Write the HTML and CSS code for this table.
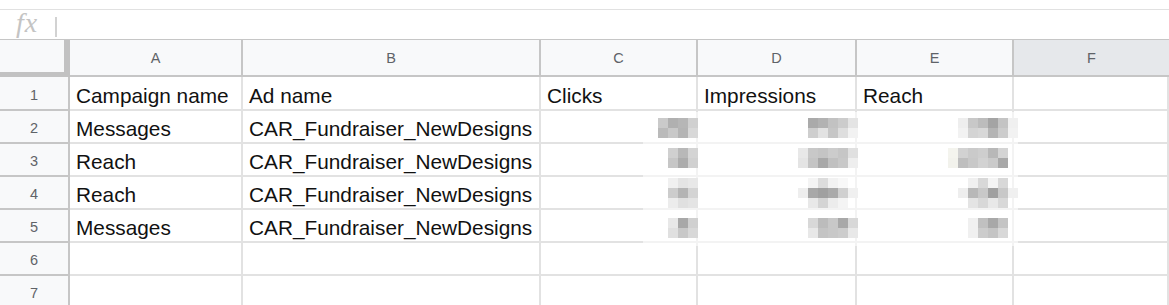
FILE: index.html
```html
<!DOCTYPE html>
<html>
<head>
<meta charset="utf-8">
<link rel="stylesheet" href="styles.css">
</head>
<body>
<div class="topgap"></div>
<div class="formula"><span class="fx">fx</span><span class="sep"></span></div>
<div class="sheet">
  <div class="corner"></div>
  <div class="ch">A</div>
  <div class="ch">B</div>
  <div class="ch">C</div>
  <div class="ch">D</div>
  <div class="ch">E</div>
  <div class="ch sel">F</div>

  <div class="rh">1</div>
  <div class="c">Campaign name</div>
  <div class="c">Ad name</div>
  <div class="c">Clicks</div>
  <div class="c">Impressions</div>
  <div class="c">Reach</div>
  <div class="c"></div>

  <div class="rh">2</div>
  <div class="c">Messages</div>
  <div class="c">CAR_Fundraiser_NewDesigns</div>
  <div class="c"></div><div class="c"></div><div class="c"></div><div class="c"></div>

  <div class="rh">3</div>
  <div class="c">Reach</div>
  <div class="c">CAR_Fundraiser_NewDesigns</div>
  <div class="c"></div><div class="c"></div><div class="c"></div><div class="c"></div>

  <div class="rh">4</div>
  <div class="c">Reach</div>
  <div class="c">CAR_Fundraiser_NewDesigns</div>
  <div class="c"></div><div class="c"></div><div class="c"></div><div class="c"></div>

  <div class="rh">5</div>
  <div class="c">Messages</div>
  <div class="c">CAR_Fundraiser_NewDesigns</div>
  <div class="c"></div><div class="c"></div><div class="c"></div><div class="c"></div>

  <div class="rh">6</div>
  <div class="c"></div><div class="c"></div><div class="c"></div><div class="c"></div><div class="c"></div><div class="c"></div>

  <div class="rh">7</div>
  <div class="c"></div><div class="c"></div><div class="c"></div><div class="c"></div><div class="c"></div><div class="c"></div>

  <svg class="redact" width="380" height="140" viewBox="0 0 380 140" shape-rendering="crispEdges" aria-hidden="true">
    <rect x="5" y="4" width="375" height="134" fill="#fff" fill-opacity="0.6"/>
    <!-- C2 -->
    <g transform="translate(20,10)">
      <rect x="0" y="0" width="10" height="10" fill="#cacaca"/><rect x="10" y="0" width="10" height="10" fill="#b0b0b0"/><rect x="20" y="0" width="10" height="10" fill="#b6b6b6"/><rect x="30" y="0" width="10" height="10" fill="#d0d0d0"/>
      <rect x="0" y="10" width="10" height="10" fill="#bababa"/><rect x="10" y="10" width="10" height="10" fill="#c8c8c8"/><rect x="20" y="10" width="10" height="10" fill="#b4b4b4"/><rect x="30" y="10" width="10" height="10" fill="#d8d8d8"/>
    </g>
    <!-- D2 -->
    <g transform="translate(170,10)">
      <rect x="0" y="0" width="10" height="10" fill="#aaaaaa"/><rect x="10" y="0" width="10" height="10" fill="#b2b2b2"/><rect x="20" y="0" width="10" height="10" fill="#c2c2c2"/><rect x="30" y="0" width="10" height="10" fill="#cccccc"/><rect x="40" y="0" width="10" height="10" fill="#e4e4e4"/>
      <rect x="0" y="10" width="10" height="10" fill="#cecece"/><rect x="10" y="10" width="10" height="10" fill="#e2e2e2"/><rect x="20" y="10" width="10" height="10" fill="#c6c6c6"/><rect x="30" y="10" width="10" height="10" fill="#dedede"/><rect x="40" y="10" width="10" height="10" fill="#f2f2f2"/>
    </g>
    <!-- E2 -->
    <g transform="translate(320,10)">
      <rect x="0" y="0" width="10" height="10" fill="#eeeeee"/><rect x="10" y="0" width="10" height="10" fill="#c8c8c8"/><rect x="20" y="0" width="10" height="10" fill="#bcbcbc"/><rect x="30" y="0" width="10" height="10" fill="#a4a4a4"/><rect x="40" y="0" width="10" height="10" fill="#c4c4c4"/><rect x="50" y="0" width="10" height="10" fill="#f0f0f0"/>
      <rect x="0" y="10" width="10" height="10" fill="#f2f2f2"/><rect x="10" y="10" width="10" height="10" fill="#d4d4d4"/><rect x="20" y="10" width="10" height="10" fill="#d8d8d8"/><rect x="30" y="10" width="10" height="10" fill="#b4b4b4"/><rect x="40" y="10" width="10" height="10" fill="#cccccc"/><rect x="50" y="10" width="10" height="10" fill="#f2f2f2"/>
    </g>
    <!-- C3 -->
    <g transform="translate(30,40)">
      <rect x="0" y="0" width="10" height="10" fill="#d0d0d0"/><rect x="10" y="0" width="10" height="10" fill="#b8b8b8"/><rect x="20" y="0" width="10" height="10" fill="#d4d4d4"/>
      <rect x="0" y="10" width="10" height="10" fill="#c6c6c6"/><rect x="10" y="10" width="10" height="10" fill="#acacac"/><rect x="20" y="10" width="10" height="10" fill="#d0d0d0"/>
    </g>
    <!-- D3 -->
    <g transform="translate(160,40)">
      <rect x="0" y="0" width="10" height="10" fill="#e8e8e8"/><rect x="10" y="0" width="10" height="10" fill="#c8c8c8"/><rect x="20" y="0" width="10" height="10" fill="#c4c4c4"/><rect x="30" y="0" width="10" height="10" fill="#cccccc"/><rect x="40" y="0" width="10" height="10" fill="#c6c6c6"/><rect x="50" y="0" width="10" height="10" fill="#e0e0e0"/>
      <rect x="0" y="10" width="10" height="10" fill="#e4e4e4"/><rect x="10" y="10" width="10" height="10" fill="#c4c4c4"/><rect x="20" y="10" width="10" height="10" fill="#a8a8a8"/><rect x="30" y="10" width="10" height="10" fill="#c0c0c0"/><rect x="40" y="10" width="10" height="10" fill="#c8c8c8"/><rect x="50" y="10" width="10" height="10" fill="#eeeeee"/>
    </g>
    <!-- E3 -->
    <g transform="translate(310,40)">
      <rect x="0" y="0" width="10" height="10" fill="#f4f4ee"/><rect x="10" y="0" width="10" height="10" fill="#d2d2d2"/><rect x="20" y="0" width="10" height="10" fill="#cacaca"/><rect x="30" y="0" width="10" height="10" fill="#cecece"/><rect x="40" y="0" width="10" height="10" fill="#b8b8b8"/><rect x="50" y="0" width="10" height="10" fill="#d4d4d4"/>
      <rect x="0" y="10" width="10" height="10" fill="#f2f2ec"/><rect x="10" y="10" width="10" height="10" fill="#bebebe"/><rect x="20" y="10" width="10" height="10" fill="#c8c8c8"/><rect x="30" y="10" width="10" height="10" fill="#d2d2d2"/><rect x="40" y="10" width="10" height="10" fill="#cacaca"/><rect x="50" y="10" width="10" height="10" fill="#a8a8a8"/>
    </g>
    <!-- C4 -->
    <g transform="translate(30,70)">
      <rect x="0" y="0" width="10" height="10" fill="#f0f0f0"/><rect x="10" y="0" width="10" height="10" fill="#e4e4e4"/><rect x="20" y="0" width="10" height="10" fill="#e8e8e8"/>
      <rect x="0" y="10" width="10" height="10" fill="#cccccc"/><rect x="10" y="10" width="10" height="10" fill="#b4b4b4"/><rect x="20" y="10" width="10" height="10" fill="#d4d4d4"/>
      <rect x="0" y="20" width="10" height="10" fill="#ececec"/><rect x="10" y="20" width="10" height="10" fill="#e0e0e0"/><rect x="20" y="20" width="10" height="10" fill="#e4e4e4"/>
    </g>
    <!-- D4 -->
    <g transform="translate(160,70)">
      <rect x="10" y="0" width="10" height="10" fill="#f4f4f4"/><rect x="20" y="0" width="10" height="10" fill="#dcdcdc"/><rect x="30" y="0" width="10" height="10" fill="#f2f2f2"/><rect x="40" y="0" width="10" height="10" fill="#f8f8f8"/>
      <rect x="0" y="10" width="10" height="10" fill="#eeeeee"/><rect x="10" y="10" width="10" height="10" fill="#a8a8a8"/><rect x="20" y="10" width="10" height="10" fill="#a0a0a0"/><rect x="30" y="10" width="10" height="10" fill="#aaaaaa"/><rect x="40" y="10" width="10" height="10" fill="#d0d0d0"/><rect x="50" y="10" width="10" height="10" fill="#f0f0f0"/>
      <rect x="10" y="20" width="10" height="10" fill="#e8e8e8"/><rect x="20" y="20" width="10" height="10" fill="#d4d4d4"/><rect x="30" y="20" width="10" height="10" fill="#ececec"/><rect x="40" y="20" width="10" height="10" fill="#f4f4f4"/>
    </g>
    <!-- E4 -->
    <g transform="translate(320,70)">
      <rect x="10" y="0" width="10" height="10" fill="#f0f0f0"/><rect x="20" y="0" width="10" height="10" fill="#d8d8d8"/><rect x="30" y="0" width="10" height="10" fill="#f4f4f4"/><rect x="40" y="0" width="10" height="10" fill="#d8d8d8"/>
      <rect x="0" y="10" width="10" height="10" fill="#eeeeee"/><rect x="10" y="10" width="10" height="10" fill="#b8b8b8"/><rect x="20" y="10" width="10" height="10" fill="#c8c8c8"/><rect x="30" y="10" width="10" height="10" fill="#a0a0a0"/><rect x="40" y="10" width="10" height="10" fill="#c8c8c8"/><rect x="50" y="10" width="10" height="10" fill="#f0f0f0"/>
      <rect x="10" y="20" width="10" height="10" fill="#e4e4e4"/><rect x="20" y="20" width="10" height="10" fill="#d8d8d8"/><rect x="30" y="20" width="10" height="10" fill="#e8e8e8"/><rect x="40" y="20" width="10" height="10" fill="#d8d8d8"/>
    </g>
    <!-- C5 -->
    <g transform="translate(30,110)">
      <rect x="0" y="0" width="10" height="10" fill="#e8e8e8"/><rect x="10" y="0" width="10" height="10" fill="#a8a8a8"/><rect x="20" y="0" width="10" height="10" fill="#d0d0d0"/>
      <rect x="0" y="10" width="10" height="10" fill="#e0e0e0"/><rect x="10" y="10" width="10" height="10" fill="#c8c8c8"/><rect x="20" y="10" width="10" height="10" fill="#d8d8d8"/>
    </g>
    <!-- D5 -->
    <g transform="translate(170,110)">
      <rect x="0" y="0" width="10" height="10" fill="#d8d8d8"/><rect x="10" y="0" width="10" height="10" fill="#bcbcbc"/><rect x="20" y="0" width="10" height="10" fill="#c8c8c8"/><rect x="30" y="0" width="10" height="10" fill="#a8a8a8"/><rect x="40" y="0" width="10" height="10" fill="#d8d8d8"/>
      <rect x="0" y="10" width="10" height="10" fill="#e8e8e8"/><rect x="10" y="10" width="10" height="10" fill="#c4c4c4"/><rect x="20" y="10" width="10" height="10" fill="#c8c8c8"/><rect x="30" y="10" width="10" height="10" fill="#cccccc"/><rect x="40" y="10" width="10" height="10" fill="#e8e8e8"/>
    </g>
    <!-- E5 -->
    <g transform="translate(330,110)">
      <rect x="0" y="0" width="10" height="10" fill="#f0f0f0"/><rect x="10" y="0" width="10" height="10" fill="#c0c0c0"/><rect x="20" y="0" width="10" height="10" fill="#a8a8a8"/><rect x="30" y="0" width="10" height="10" fill="#c4c4c4"/>
      <rect x="0" y="10" width="10" height="10" fill="#f0f0f0"/><rect x="10" y="10" width="10" height="10" fill="#cccccc"/><rect x="20" y="10" width="10" height="10" fill="#c4c4c4"/><rect x="30" y="10" width="10" height="10" fill="#d8d8d8"/>
    </g>
  </svg>
</div>
</body>
</html>
```

FILE: styles.css
```css
html, body {
  margin: 0;
  padding: 0;
  background: #ffffff;
  overflow: hidden;
}

body {
  width: 1169px;
  height: 305px;
  font-family: "Liberation Sans", Arial, sans-serif;
}

.topgap {
  height: 9px;
}

.formula {
  height: 29px;
  border-top: 1px solid #e1e1e1;
  display: flex;
  align-items: center;
}

.fx {
  font-family: "Liberation Serif", "DejaVu Serif", serif;
  font-style: italic;
  font-size: 28px;
  line-height: 1;
  color: #c4c4c4;
  width: 55px;
  padding-left: 16px;
  box-sizing: border-box;
  margin-top: -3px;
  letter-spacing: 1px;
}

.sep {
  width: 2px;
  height: 20px;
  background: #d2d2d2;
  margin-top: 4px;
}

.sheet {
  position: relative;
  display: grid;
  grid-template-columns: 70px 173px 298px 157px 159px 157px 155px;
  grid-template-rows: 37px 34px repeat(6, 33px);
  border-top: 1px solid #c6c6c6;
}

.corner {
  background: #f8f9fa;
  border-right: 6px solid #c2c2c2;
  border-bottom: 5px solid #c2c2c2;
  box-sizing: border-box;
}

.ch {
  background: #f8f9fa;
  border-right: 2px solid #c6c6c6;
  border-bottom: 2px solid #c6c6c6;
  box-sizing: border-box;
  display: flex;
  align-items: center;
  justify-content: center;
  color: #5f6368;
  font-size: 14.5px;
  padding-top: 1px;
}

.ch.sel {
  background: #e6e8eb;
  border-right: none;
}

.rh {
  background: #f8f9fa;
  border-right: 2px solid #c6c6c6;
  border-bottom: 2px solid #c6c6c6;
  box-sizing: border-box;
  display: flex;
  align-items: center;
  justify-content: center;
  color: #5f6368;
  font-size: 14.5px;
  padding-top: 3px;
}

.c {
  border-right: 2px solid #e2e2e2;
  border-bottom: 2px solid #e2e2e2;
  box-sizing: border-box;
  display: flex;
  align-items: flex-end;
  padding: 0 0 1px 6px;
  font-size: 20.8px;
  line-height: 24px;
  color: #111111;
  white-space: nowrap;
  overflow: hidden;
}

.redact {
  position: absolute;
  left: 638px;
  top: 68px;
  display: block;
}
```
